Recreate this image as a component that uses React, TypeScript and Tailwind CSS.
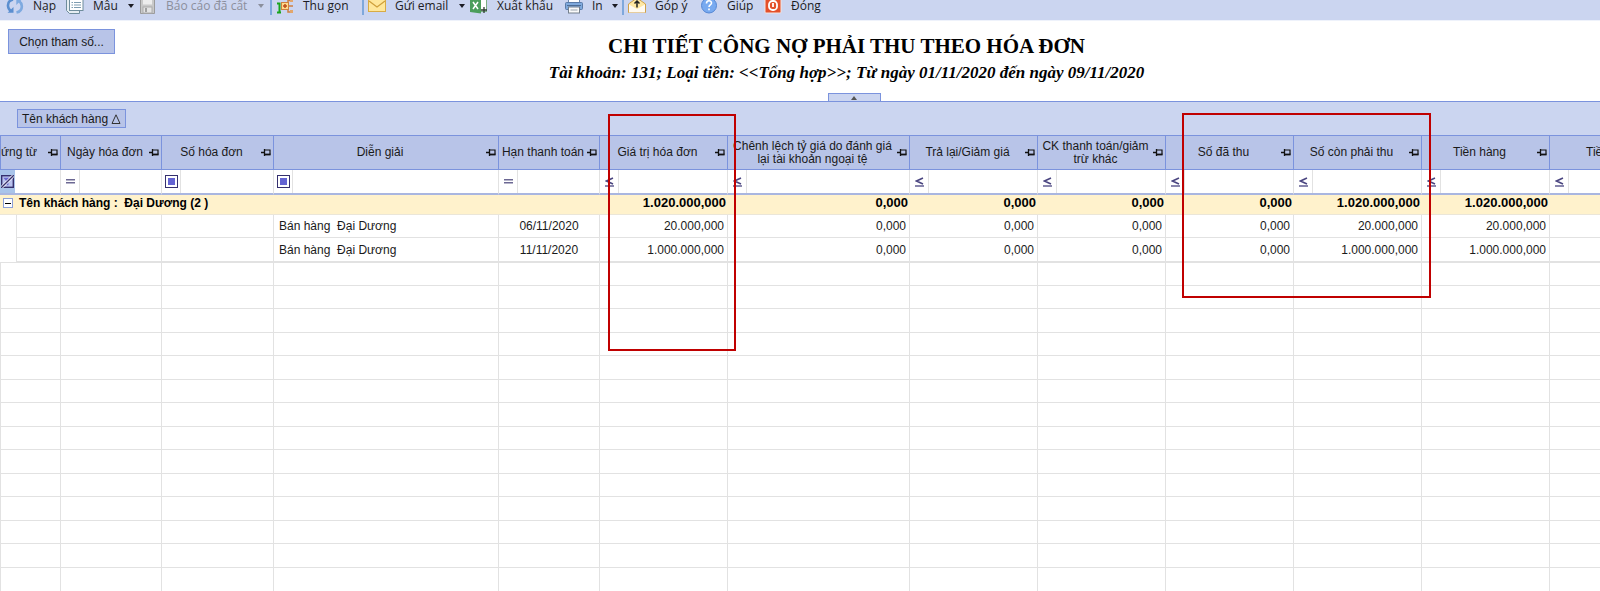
import React from 'react';

type FilterKind = 'none' | 'equals' | 'contains' | 'less';

interface Column {
  title: string;
  col: string;
  filter: FilterKind;
}

interface Row {
  text: string;
  date: string;
  amounts: string[];
}

const columns: Column[] = [
  { title: 'ứng từ', col: 'w-[44px]', filter: 'none' },
  { title: 'Ngày hóa đơn', col: 'w-[101px]', filter: 'equals' },
  { title: 'Số hóa đơn', col: 'w-[112px]', filter: 'contains' },
  { title: 'Diễn giải', col: 'w-[225px]', filter: 'contains' },
  { title: 'Hạn thanh toán', col: 'w-[101px]', filter: 'equals' },
  { title: 'Giá trị hóa đơn', col: 'w-[128px]', filter: 'less' },
  { title: 'Chênh lệch tỷ giá do đánh giá\nlại tài khoản ngoại tệ', col: 'w-[182px]', filter: 'less' },
  { title: 'Trả lại/Giảm giá', col: 'w-[128px]', filter: 'less' },
  { title: 'CK thanh toán/giảm\ntrừ khác', col: 'w-[128px]', filter: 'less' },
  { title: 'Số đã thu', col: 'w-[128px]', filter: 'less' },
  { title: 'Số còn phải thu', col: 'w-[128px]', filter: 'less' },
  { title: 'Tiền hàng', col: 'w-[128px]', filter: 'less' },
  { title: 'Tiền CK', col: 'w-[128px]', filter: 'less' },
];

const totals = ['1.020.000,000', '0,000', '0,000', '0,000', '0,000', '1.020.000,000', '1.020.000,000', ''];

const rows: Row[] = [
  {
    text: 'Bán hàng  Đại Dương',
    date: '06/11/2020',
    amounts: ['20.000,000', '0,000', '0,000', '0,000', '0,000', '20.000,000', '20.000,000', ''],
  },
  {
    text: 'Bán hàng  Đại Dương',
    date: '11/11/2020',
    amounts: ['1.000.000,000', '0,000', '0,000', '0,000', '0,000', '1.000.000,000', '1.000.000,000', ''],
  },
];

const blankRows = Array.from({ length: 14 }, (_, i) => i);

// --- ICONS ---

const Icon: React.FC<{ children: React.ReactNode }> = ({ children }) => (
  <svg width="18" height="18" viewBox="0 0 18 18" fill="none" className="shrink-0" aria-hidden="true">
    {children}
  </svg>
);

const RefreshIcon = () => (
  <Icon>
    <path d="M7 2.5C3.5 3.3 1.8 6 2 9c.2 2.200 1.200 4 3 5.200" stroke="#5b8fd0" strokeWidth="2.600" />
    <path d="M1.500 15.800h6V10z" fill="#5b8fd0" />
    <path d="M10.500 15.500C14 14.700 16 12 15.800 9c-.2-2.200-1.200-4-3-5.200" stroke="#7eaae0" strokeWidth="2.600" />
    <path d="M16.300 2h-6v6z" fill="#7eaae0" />
  </Icon>
);

const TemplateIcon = () => (
  <Icon>
    <path d="M.5 1.500h13v15H3.500l-3-3z" fill="#e6eef2" stroke="#6f8d9c" />
    <rect x="3.500" y="1" width="13.500" height="12.500" fill="#fff" stroke="#6f8d9c" />
    <path d="M5.500 5.500h1.500M5.500 8h1.500M5.500 10.500h1.500M8 5.500h7M8 8h7M8 10.500h7" stroke="#7d9cb0" />
  </Icon>
);

const SaveIcon = () => (
  <Icon>
    <path d="M1.500 1.500h14v15h-14z" fill="#c9c9c9" stroke="#9b9b9b" />
    <rect x="4" y="1.500" width="9" height="6" fill="#ededed" />
    <rect x="4" y="10" width="9" height="6" fill="#e4e4e4" stroke="#acacac" />
    <rect x="6" y="11" width="2" height="4" fill="#a0a0a0" />
  </Icon>
);

const CollapseIcon = () => (
  <Icon>
    <path d="M1 6.500h2.500v9M1 15.500h4" stroke="#18a51c" strokeWidth="2" />
    <path d="M10 9h7M12 9V3.500h5M12 9v6h5" stroke="#cf8040" strokeWidth="1.500" />
    <rect x="5.500" y="5.500" width="7" height="7" fill="#ffd98a" stroke="#cf8040" />
    <path d="M7 9h4M9 7v4" stroke="#bd4b1c" strokeWidth="1.500" />
    <rect x="14" y="2" width="3" height="3" fill="#e2a66c" />
    <rect x="14" y="13" width="3" height="3" fill="#e2a66c" />
  </Icon>
);

const MailIcon = () => (
  <Icon>
    <rect x=".5" y="2.500" width="17" height="12" fill="#ffe79a" stroke="#d8ab45" />
    <path d="M1 4l8 6 8-6" stroke="#cf9f3b" strokeWidth="1.200" />
  </Icon>
);

const ExcelIcon = () => (
  <Icon>
    <rect x="7" y="2.500" width="9.500" height="12" fill="#fff" stroke="#7caf84" />
    <path d="M0 2l11-1.500v16L0 15z" fill="#4c9e5b" />
    <path d="M3 5l5 7M8 5l-5 7" stroke="#fff" strokeWidth="1.500" />
    <path d="M14 10v6M11 13h6" stroke="#2b3a2e" strokeWidth="1.300" />
  </Icon>
);

const PrintIcon = () => (
  <Icon>
    <rect x="3.500" y="1.500" width="11" height="6" fill="#fff" stroke="#6a88ad" />
    <rect x=".5" y="5.500" width="17" height="7" rx="1" fill="#7fa9dc" stroke="#5a7ba8" />
    <path d="M2 8.500h14" stroke="#4d6c94" />
    <rect x="3.500" y="10" width="11" height="6" fill="#fafafa" stroke="#75808d" />
    <path d="M5.500 13h7" stroke="#9aa4ae" />
  </Icon>
);

const FeedbackIcon = () => (
  <Icon>
    <path d="M.5 7L9 1l8.500 6v8.500H.5z" fill="#ffe8a3" stroke="#cfa14a" />
    <path d="M1 7.500l8 4.500 8-4.500v8H1z" fill="#fffaf0" />
    <path d="M9 10.500V4M6.500 6.500L9 4l2.500 2.500" stroke="#222" strokeWidth="1.500" />
  </Icon>
);

const HelpIcon = () => (
  <Icon>
    <circle cx="9" cy="8.500" r="7.500" fill="#78aaf0" stroke="#5587d4" />
    <path d="M6.500 6.500c0-3.500 5-3.500 5-.5 0 2-2.500 1.900-2.500 4M9 11.600v1.700" stroke="#fff" strokeWidth="1.600" />
  </Icon>
);

const CloseIcon = () => (
  <Icon>
    <rect x="1" y="0" width="16" height="16" rx="1" fill="#e4502a" stroke="#f5e4e0" />
    <rect x="5" y="4" width="8" height="9" rx="3.500" stroke="#fff" strokeWidth="1.800" />
    <path d="M9 6v4" stroke="#fff" strokeWidth="1.800" />
  </Icon>
);

const Caret = () => (
  <svg width="6" height="4" viewBox="0 0 6 4" className="ml-auto shrink-0" fill="currentColor" aria-hidden="true">
    <path d="M0 0h6L3 4z" />
  </svg>
);

const PinIcon = () => (
  <svg width="10" height="9" viewBox="0 0 10 9" className="shrink-0" fill="none" stroke="#111" aria-hidden="true">
    <path d="M0 4.500h4M3.500 1v7" strokeWidth="1.300" />
    <path d="M4 2h5v4.500" strokeWidth="1.200" />
    <path d="M4 6.500h5.600" strokeWidth="1.800" />
  </svg>
);

const NoFilterIcon = () => (
  <svg width="13" height="13" viewBox="0 0 14 14" fill="none" aria-hidden="true">
    <rect x=".75" y=".75" width="12.500" height="12.500" fill="#b9c2ee" stroke="#35306e" strokeWidth="1.500" />
    <path d="M2.500 3h9L8 7v4H6V7z" fill="#6a69cf" />
    <path d="M1 13L13 1" stroke="#fff" strokeWidth="3" />
    <path d="M1 13L13 1" stroke="#35306e" strokeWidth="1.500" />
  </svg>
);

const ContainsIcon = () => (
  <svg width="13" height="13" viewBox="0 0 13 13" fill="none" aria-hidden="true">
    <rect x=".5" y=".5" width="12" height="12" fill="#fff" stroke="#35306e" />
    <rect x="3" y="3" width="7" height="7" fill="#6464d2" />
  </svg>
);

const EqualsIcon = () => (
  <svg width="9" height="5" viewBox="0 0 9 5" fill="none" stroke="#6c6893" aria-hidden="true">
    <path d="M0 .75h9M0 3.750h9" strokeWidth="1.500" />
  </svg>
);

const LessIcon = () => (
  <svg width="9" height="10" viewBox="0 0 9 10" fill="none" stroke="#4a4580" aria-hidden="true">
    <path d="M8 1L1.500 4 8 7" strokeWidth="1.600" />
    <path d="M0 9h9" strokeWidth="1.300" />
  </svg>
);

const filterIcons: Record<FilterKind, React.ReactNode> = {
  none: <NoFilterIcon />,
  equals: <EqualsIcon />,
  contains: <ContainsIcon />,
  less: <LessIcon />,
};

// --- TOOLBAR ---

interface ToolProps {
  icon: React.ReactNode;
  label: string;
  size: string;
  menu?: boolean;
  disabled?: boolean;
}

const Tool: React.FC<ToolProps> = ({ icon, label, size, menu, disabled }) => (
  <button
    type="button"
    disabled={disabled}
    className={`flex shrink-0 items-center gap-[9px] pr-[5px] whitespace-nowrap ${size} ${disabled ? 'text-[#8b8f9c]' : 'text-[#1c1c24]'}`}
  >
    {icon}
    {label}
    {menu && <Caret />}
  </button>
);

const Separator = () => <span className="mr-1 ml-px h-[18px] w-[2px] shrink-0 bg-[#7fa8dc]" />;

const Toolbar = () => (
  <div className="flex h-[21px] items-end overflow-hidden border-b border-[#eef2fb] bg-[#cbd5f0]">
    <div className="flex h-[28px] shrink-0 items-center pl-1.5 font-['Open_Sans',sans-serif] text-[12px] leading-4">
      <Tool icon={<RefreshIcon />} label="Nạp" size="w-[60px]" />
      <Tool icon={<TemplateIcon />} label="Mẫu" size="w-[73px]" menu />
      <Tool icon={<SaveIcon />} label="Báo cáo đã cất" size="w-[130px]" menu disabled />
      <Separator />
      <Tool icon={<CollapseIcon />} label="Thu gọn" size="w-[85px]" />
      <Separator />
      <Tool icon={<MailIcon />} label="Gửi email" size="w-[102px]" menu />
      <Tool icon={<ExcelIcon />} label="Xuất khẩu" size="w-[95px]" />
      <Tool icon={<PrintIcon />} label="In" size="w-[56px]" menu />
      <Separator />
      <Tool icon={<FeedbackIcon />} label="Góp ý" size="w-[72px]" />
      <Tool icon={<HelpIcon />} label="Giúp" size="w-[64px]" />
      <Tool icon={<CloseIcon />} label="Đóng" size="w-[64px]" />
    </div>
  </div>
);

// --- GRID ---

const ReportGrid = () => (
  <table className="w-[1678px] table-fixed border-separate border-spacing-0">
    <colgroup>
      <col className="w-[17px]" />
      {columns.map(c => (
        <col key={c.title} className={c.col} />
      ))}
    </colgroup>
    <thead>
      <tr className="h-[34px] bg-[#b8c4e8]">
        {columns.map((c, i) => (
          <th
            key={c.title}
            scope="col"
            colSpan={i === 0 ? 2 : 1}
            className={`border-r border-b border-[#7b93dd] p-0 font-normal ${i === 0 ? 'border-l' : ''}`}
          >
            <div className="flex items-center pr-0.5">
              <span className={`flex-1 leading-[13px] whitespace-pre ${i === 0 ? 'text-left' : 'text-center'}`}>{c.title}</span>
              <PinIcon />
            </div>
          </th>
        ))}
      </tr>
      <tr className="h-[25px]">
        {columns.map((c, i) => (
          <td
            key={c.title}
            colSpan={i === 0 ? 2 : 1}
            className="border-r border-b-2 border-r-[#e2e2e2] border-b-[#a9b6e0] p-0"
          >
            <div className="flex h-[23px]">
              <button
                type="button"
                aria-label={`Điều kiện lọc ${c.title}`}
                className={`flex shrink-0 items-center justify-center ${i === 0 ? 'w-[15px] bg-[#a9c4ea]' : 'w-[19px] border-r border-[#e2e2e2]'}`}
              >
                {filterIcons[c.filter]}
              </button>
              <input type="text" aria-label={`Lọc ${c.title}`} className="w-0 flex-1 px-1 outline-none" />
            </div>
          </td>
        ))}
      </tr>
    </thead>
    <tbody>
      <tr className="h-[20px] bg-[#fff2cc] text-[13px] leading-4 font-bold text-black *:align-top">
        <td colSpan={6} className="border-b border-[#ebe6d8] p-0">
          <div className="flex items-center gap-[6px] pl-[3px]">
            <button
              type="button"
              aria-label="Thu gọn nhóm"
              className="flex size-[10px] items-center justify-center border border-[#8ca0d8] bg-white"
            >
              <span className="h-px w-[6px] bg-black" />
            </button>
            <span className="text-[12px] whitespace-pre">Tên khách hàng :  Đại Dương (2 )</span>
          </div>
        </td>
        {totals.map((value, i) => (
          <td key={i} className="border-b border-[#ebe6d8] p-0 pr-0.5 text-right">{value}</td>
        ))}
      </tr>
      {rows.map(row => (
        <tr key={row.date} className="h-[23px] *:border-[#e2e2e2] last:h-[24px]">
          <td className="border-r p-0" />
          <td className="border-r border-b p-0" />
          <td className="border-r border-b p-0" />
          <td className="border-r border-b p-0" />
          <td className="border-r border-b p-0 pl-[5px] whitespace-pre">{row.text}</td>
          <td className="border-r border-b p-0 text-center">{row.date}</td>
          {row.amounts.map((value, i) => (
            <td key={i} className="border-r border-b p-0 pr-[3px] text-right">{value}</td>
          ))}
        </tr>
      ))}
    </tbody>
    <tbody>
      {blankRows.map(i => (
        <tr key={i} className="h-[23px] odd:h-[24px]">
          {columns.map((c, n) => (
            <td
              key={c.title}
              colSpan={n === 0 ? 2 : 1}
              className={`border-r border-[#e2e2e2] p-0 ${n === 0 ? 'border-l' : ''} ${i < 13 ? 'border-b' : ''} ${i === 0 ? 'border-t' : ''}`}
            />
          ))}
        </tr>
      ))}
    </tbody>
  </table>
);

export default function App() {
  return (
    <div className="relative min-h-screen overflow-hidden bg-white font-['Liberation_Sans',Arial,sans-serif] text-[12px] leading-4 text-[#1a1a1a]">
      <Toolbar />

      {/* Report title */}
      <div className="flex items-start pt-2 pr-[22px] pl-2">
        <button type="button" className="h-[25px] w-[107px] shrink-0 border border-[#7b93dd] bg-[#b8c4e8]">
          Chọn tham số...
        </button>
        <div className="flex-1 pt-1 text-center font-['Liberation_Serif','Times_New_Roman',serif] font-bold text-black">
          <h1 className="text-[21px] leading-[26px]">CHI TIẾT CÔNG NỢ PHẢI THU THEO HÓA ĐƠN</h1>
          <p className="text-[17px] leading-[28px] italic">
            Tài khoản: 131; Loại tiền: &lt;&lt;Tổng hợp&gt;&gt;; Từ ngày 01/11/2020 đến ngày 09/11/2020
          </p>
        </div>
      </div>
      <div className="flex justify-center pt-[6px] pl-[108px]">
        <button
          type="button"
          aria-label="Ẩn tiêu đề"
          className="flex h-[8px] w-[53px] items-center justify-center border border-b-0 border-[#7b93dd] bg-[#cbd5f0]"
        >
          <svg width="6" height="4" viewBox="0 0 6 4" fill="#555" aria-hidden="true">
            <path d="M0 4h6L3 0z" />
          </svg>
        </button>
      </div>

      {/* Group by */}
      <div className="flex h-[35px] items-center border-y border-[#7b93dd] bg-[#cbd5f0] pl-[17px]">
        <button
          type="button"
          className="flex h-[19px] w-[109px] items-center justify-between border border-[#7b93dd] bg-[#b8c4e8] px-1"
        >
          Tên khách hàng
          <svg width="10" height="10" viewBox="0 0 10 10" fill="none" stroke="#333" aria-hidden="true">
            <path d="M1 9.500h8L5 .8z" />
          </svg>
        </button>
      </div>

      <ReportGrid />

      {/* Highlight frames */}
      <div className="pointer-events-none absolute top-[114px] left-[608px] h-[237px] w-[128px] border-2 border-[#c00000]" />
      <div className="pointer-events-none absolute top-[113px] left-[1182px] h-[185px] w-[249px] border-2 border-[#c00000]" />
    </div>
  );
}
